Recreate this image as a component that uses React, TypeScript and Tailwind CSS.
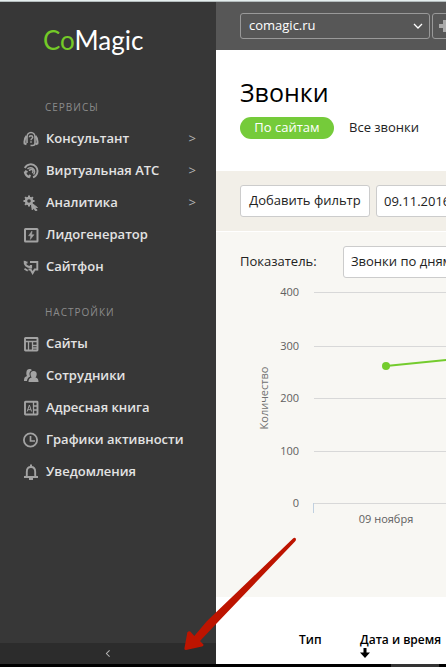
import { useState, type ReactNode } from "react";

type MenuItem = {
  label: string;
  icon: ReactNode;
  nested?: boolean;
};

const SERVICES: MenuItem[] = [
  {
    label: "Консультант",
    nested: true,
    icon: (
      <>
        <path d="M4 12V6a4 4.500 0 0 1 8 0v6.500q0 2-2.500 2H7.500" strokeWidth="1.600" />
        <path d="M3.500 5Q1 8 1.600 12.500l1.900.7M12.500 5q2.500 3 1.900 7.500l-1.900.7" strokeWidth="2" />
        <path d="M6.300 6.300c0-2.200 3.400-2.200 3.400 0 0 1.300-1.700 1.200-1.700 2.900M8 10.300v1.400" strokeWidth="1.500" />
      </>
    ),
  },
  {
    label: "Виртуальная АТС",
    nested: true,
    icon: (
      <>
        <path d="M1.800 5A6.700 6.700 0 1 1 10 14.300" strokeWidth="1.900" />
        <path d="M4.500 6a4 4 0 1 1 6 5.500" strokeWidth="1.500" />
        <path d="M6.500 8a1.800 1.800 0 1 1 2.600 1.800" strokeWidth="1.600" />
        <path d="M1.800 8.500q.7 4.500 5 5.800" strokeWidth="2.200" />
        <path d="M2 8l2.500 1.200M6.200 14.500L7 11.800" strokeWidth="2" />
      </>
    ),
  },
  {
    label: "Аналитика",
    nested: true,
    icon: (
      <>
        <circle cx="6" cy="6" r="3" strokeWidth="2.400" />
        <path
          d="M6 .5v2M6 9.500v2M.5 6h2M9.500 6h2M2.100 2.100l1.400 1.400M3.500 8.500L2.100 9.900M9.900 2.100L8.500 3.500"
          strokeWidth="2"
        />
        <path d="M8 7.500l6.500 5-2.600.2 2.300 2.500-1.400 1-2-2.800-1.600 1.600z" fill="currentColor" strokeWidth="0.800" />
      </>
    ),
  },
  {
    label: "Лидогенератор",
    icon: (
      <>
        <rect x="2" y="2" width="12.500" height="12.500" rx="0.500" strokeWidth="2" />
        <path d="M9 4L5.500 8.800h2.200L7.300 12.500l3.700-4.800H8.700z" fill="currentColor" strokeWidth="0.500" />
      </>
    ),
  },
  {
    label: "Сайтфон",
    icon: (
      <>
        <path d="M7 3h7.300v7.500h-2.600L9.600 14l-2-3.500H5.500" strokeWidth="1.900" />
        <path d="M1.800 1.800Q1 8 8.500 8.200M1.500 3.500h3M8 6v3.500" strokeWidth="2.200" />
        <path d="M1.500 9.800l3.200 2" strokeWidth="1.800" />
      </>
    ),
  },
];

const SETTINGS: MenuItem[] = [
  {
    label: "Сайты",
    icon: (
      <>
        <rect x="2" y="2" width="12.500" height="12.500" rx="0.500" strokeWidth="1.900" />
        <path d="M2 5.500h12.500M5.500 5.500v9M9.500 5.500v9M9.500 9.500h5M9.500 12h5" strokeWidth="1.300" />
      </>
    ),
  },
  {
    label: "Сотрудники",
    icon: (
      <g fill="currentColor" stroke="none">
        <path d="M6.500 1c1.200 0 2 .5 2.400 1.300-2 .8-2.900 2.700-2.200 5l.5 1.100c-2 .8-3 2.400-3.200 4.600H1c0-3.200.7-4.200 3-5-.7-1-.8-2.300-.6-3.800C3.600 2 4.800 1 6.500 1z" />
        <path d="M10.600 3c2.200 0 3.300 1.400 3.100 3.600-.1 1.200-.5 2.200-1.200 2.900 2.300.6 3 1.600 3 4.500H5.500c0-2.900.8-3.900 3.200-4.500-.7-.7-1.100-1.700-1.200-2.900C7.300 4.400 8.400 3 10.600 3z" />
      </g>
    ),
  },
  {
    label: "Адресная книга",
    icon: (
      <>
        <rect x="2" y="1.800" width="12.500" height="12.700" rx="0.500" strokeWidth="1.900" />
        <path d="M10.500 2v12.500M10.500 6h4M10.500 10h4" strokeWidth="1.300" />
        <path d="M4.200 11.500L6.400 5l2.200 6.500M5 9.700h2.800" strokeWidth="1" />
      </>
    ),
  },
  {
    label: "Графики активности",
    icon: (
      <>
        <circle cx="7.500" cy="8" r="6.600" strokeWidth="1.800" />
        <path d="M7.500 4v5H12" strokeWidth="1.700" />
      </>
    ),
  },
  {
    label: "Уведомления",
    icon: (
      <>
        <path
          d="M1 13h14M3.500 13Q4 11 3.800 8q0-5 4.200-5t4.200 5q-.2 3 .3 5"
          strokeWidth="1.900"
        />
        <path d="M8 .5v2.500M6 15h4" strokeWidth="2" />
      </>
    ),
  },
];

// y positions inside the chart drawing
const GRID = [
  { value: 400, y: 14 },
  { value: 300, y: 68 },
  { value: 200, y: 120 },
  { value: 100, y: 173 },
  { value: 0, y: 225 },
];

function Chevron({ className }: { className: string }) {
  return (
    <svg aria-hidden="true" viewBox="0 0 10 6" fill="none" className={className}>
      <path d="M1 1l4 4 4-4" stroke="currentColor" strokeWidth="1.300" />
    </svg>
  );
}

function MenuSection({ title, items }: { title: string; items: MenuItem[] }) {
  return (
    <section>
      <h2 className="mb-2 pl-[45px] text-[10px] leading-4 tracking-widest text-[#8b8b8b]">{title}</h2>
      <ul>
        {items.map((item) => (
          <li key={item.label}>
            <a href="#" className="flex h-8 items-center pr-5 pl-[23px] text-[13px] font-semibold text-[#e3e3e3]">
              <svg
                aria-hidden="true"
                viewBox="0 0 16 16"
                fill="none"
                stroke="currentColor"
                className="mr-[7px] size-4 shrink-0 text-[#a3a3a3]"
              >
                {item.icon}
              </svg>
              <span className="flex-1">{item.label}</span>
              {item.nested && <span className="font-normal text-[#b5b5b5]">&gt;</span>}
            </a>
          </li>
        ))}
      </ul>
    </section>
  );
}

function Sidebar() {
  return (
    <aside className="flex w-[216px] shrink-0 flex-col bg-[#373737]">
      <a
        href="#"
        className="mt-[18px] ml-[43px] font-['Lato','Open_Sans',sans-serif] text-[26px] leading-10 text-white"
      >
        <span className="text-[#74c927]">Co</span>Magic
      </a>
      <nav className="mt-[39px] flex flex-1 flex-col gap-[21px]">
        <MenuSection title="СЕРВИСЫ" items={SERVICES} />
        <MenuSection title="НАСТРОЙКИ" items={SETTINGS} />
      </nav>
      <button
        type="button"
        aria-label="Свернуть меню"
        className="flex h-[21px] items-center justify-center bg-[#2c2c2c] text-[#b5b5b5]"
      >
        <Chevron className="h-[5px] w-2 rotate-90" />
      </button>
    </aside>
  );
}

function CallsChart() {
  return (
    <svg role="img" aria-label="Количество звонков по дням" className="block h-[319px] w-full">
      {GRID.map(({ value, y }) => (
        <g key={value}>
          <line x1="98" x2="100%" y1={y + 0.5} y2={y + 0.5} stroke="#d8d8d8" />
          <text x="83" y={y + 4} textAnchor="end" fontSize="11" fill="#606060">
            {value}
          </text>
        </g>
      ))}
      <path d="M97.500 225v10" stroke="#c0d0e0" />
      <text x="170" y="245" textAnchor="middle" fontSize="11" fill="#606060">
        09 ноября
      </text>
      <text transform="translate(52 120) rotate(-90)" textAnchor="middle" fontSize="11" fill="#707070">
        Количество
      </text>
      <path d="M170 88l150-15" stroke="#74cc2d" strokeWidth="2" />
      <circle cx="170" cy="88" r="4" fill="#74cc2d" />
    </svg>
  );
}

export default function App() {
  const [date, setDate] = useState("09.11.2016");

  return (
    <div className="relative flex min-h-screen flex-col overflow-hidden bg-white font-['Open_Sans','Noto_Sans',sans-serif] text-[13px] text-[#222]">
      <div className="h-0.5 border-b border-[#b4bcbd] bg-[#e5eeee]" />

      <div className="flex flex-1">
        <Sidebar />

        <main className="min-w-0 flex-1 overflow-hidden">
          <header className="flex h-12 items-start gap-0.5 bg-[#575757] pt-[11px] pl-6">
            <div className="relative w-[190px] shrink-0 text-white">
              <select
                aria-label="Сайт"
                className="h-[26px] w-full appearance-none rounded-[3px] border border-[#999] bg-transparent px-2 text-[13px]"
              >
                <option>comagic.ru</option>
              </select>
              <Chevron className="pointer-events-none absolute top-[10px] right-[7px] h-[6px] w-[10px]" />
            </div>
            <button
              type="button"
              aria-label="Добавить сайт"
              className="flex h-[26px] w-[26px] shrink-0 items-center justify-center rounded-[3px] border border-[#999] text-[#aaa]"
            >
              <svg aria-hidden="true" viewBox="0 0 12 12" className="size-3 shrink-0">
                <path d="M6 0v12M0 6h12" stroke="currentColor" strokeWidth="4" />
              </svg>
            </button>
          </header>

          <div className="h-[121px] pt-[26px] pl-6">
            <h1 className="text-[25px] leading-8 text-black">Звонки</h1>
            <div className="mt-[9px] flex items-center whitespace-nowrap">
              <button type="button" className="h-[22px] w-[94px] rounded-full bg-[#75cb3a] text-white">
                По сайтам
              </button>
              <button type="button" className="ml-[15px] text-[#222]">
                Все звонки
              </button>
            </div>
          </div>

          <div className="flex h-[60px] items-center gap-1.5 bg-[#f2efe8] pl-6">
            <button
              type="button"
              className="h-8 w-[130px] shrink-0 rounded-[3px] border border-[#ccc] bg-white whitespace-nowrap"
            >
              Добавить фильтр
            </button>
            <input
              aria-label="Дата"
              value={date}
              onChange={(e) => setDate(e.target.value)}
              className="h-8 w-[190px] shrink-0 rounded-[3px] border border-[#ccc] bg-white px-[7px]"
            />
          </div>

          <div className="mt-px bg-[#f8f7f3] pt-[14px]">
            <div className="flex h-8 items-center pl-6">
              <label htmlFor="metric" className="w-[103px] shrink-0">
                Показатель:
              </label>
              <select
                id="metric"
                className="h-8 w-[190px] shrink-0 appearance-none rounded-[3px] border border-[#ccc] bg-white px-[7px]"
              >
                <option>Звонки по дням</option>
              </select>
            </div>
            <CallsChart />
          </div>

          <table className="mt-[35px] ml-[83px] text-[12px] whitespace-nowrap text-black">
            <thead>
              <tr className="text-left align-top leading-4">
                <th className="w-[61px] min-w-[61px] p-0 font-semibold">Тип</th>
                <th className="p-0 font-semibold">
                  Дата и время
                  <svg aria-hidden="true" viewBox="0 0 10 10" className="block size-[10px]">
                    <path d="M3.500 0h3v4.500H10L5 10 0 4.500h3.500z" />
                  </svg>
                </th>
              </tr>
            </thead>
          </table>
        </main>
      </div>

      <div className="flex h-[3px] justify-end bg-black pr-[7px]">
        <div className="w-12 bg-[#333]" />
      </div>

      {/* Pointer to the collapse button */}
      <svg
        aria-hidden="true"
        viewBox="0 0 114 114"
        className="pointer-events-none absolute bottom-4 left-[184px] size-[114px]"
      >
        <path
          d="M109 1.500q2-1.500 3 .5 0 1.500-1 2.500L33 86 16 104l3.500 3.500q0 2-1.500 2L2 113q-2 0-1.500-2L3.300 95.500q1.500-2 3-1l4 4.500L23 84z"
          fill="#bd1400"
        />
      </svg>
    </div>
  );
}
